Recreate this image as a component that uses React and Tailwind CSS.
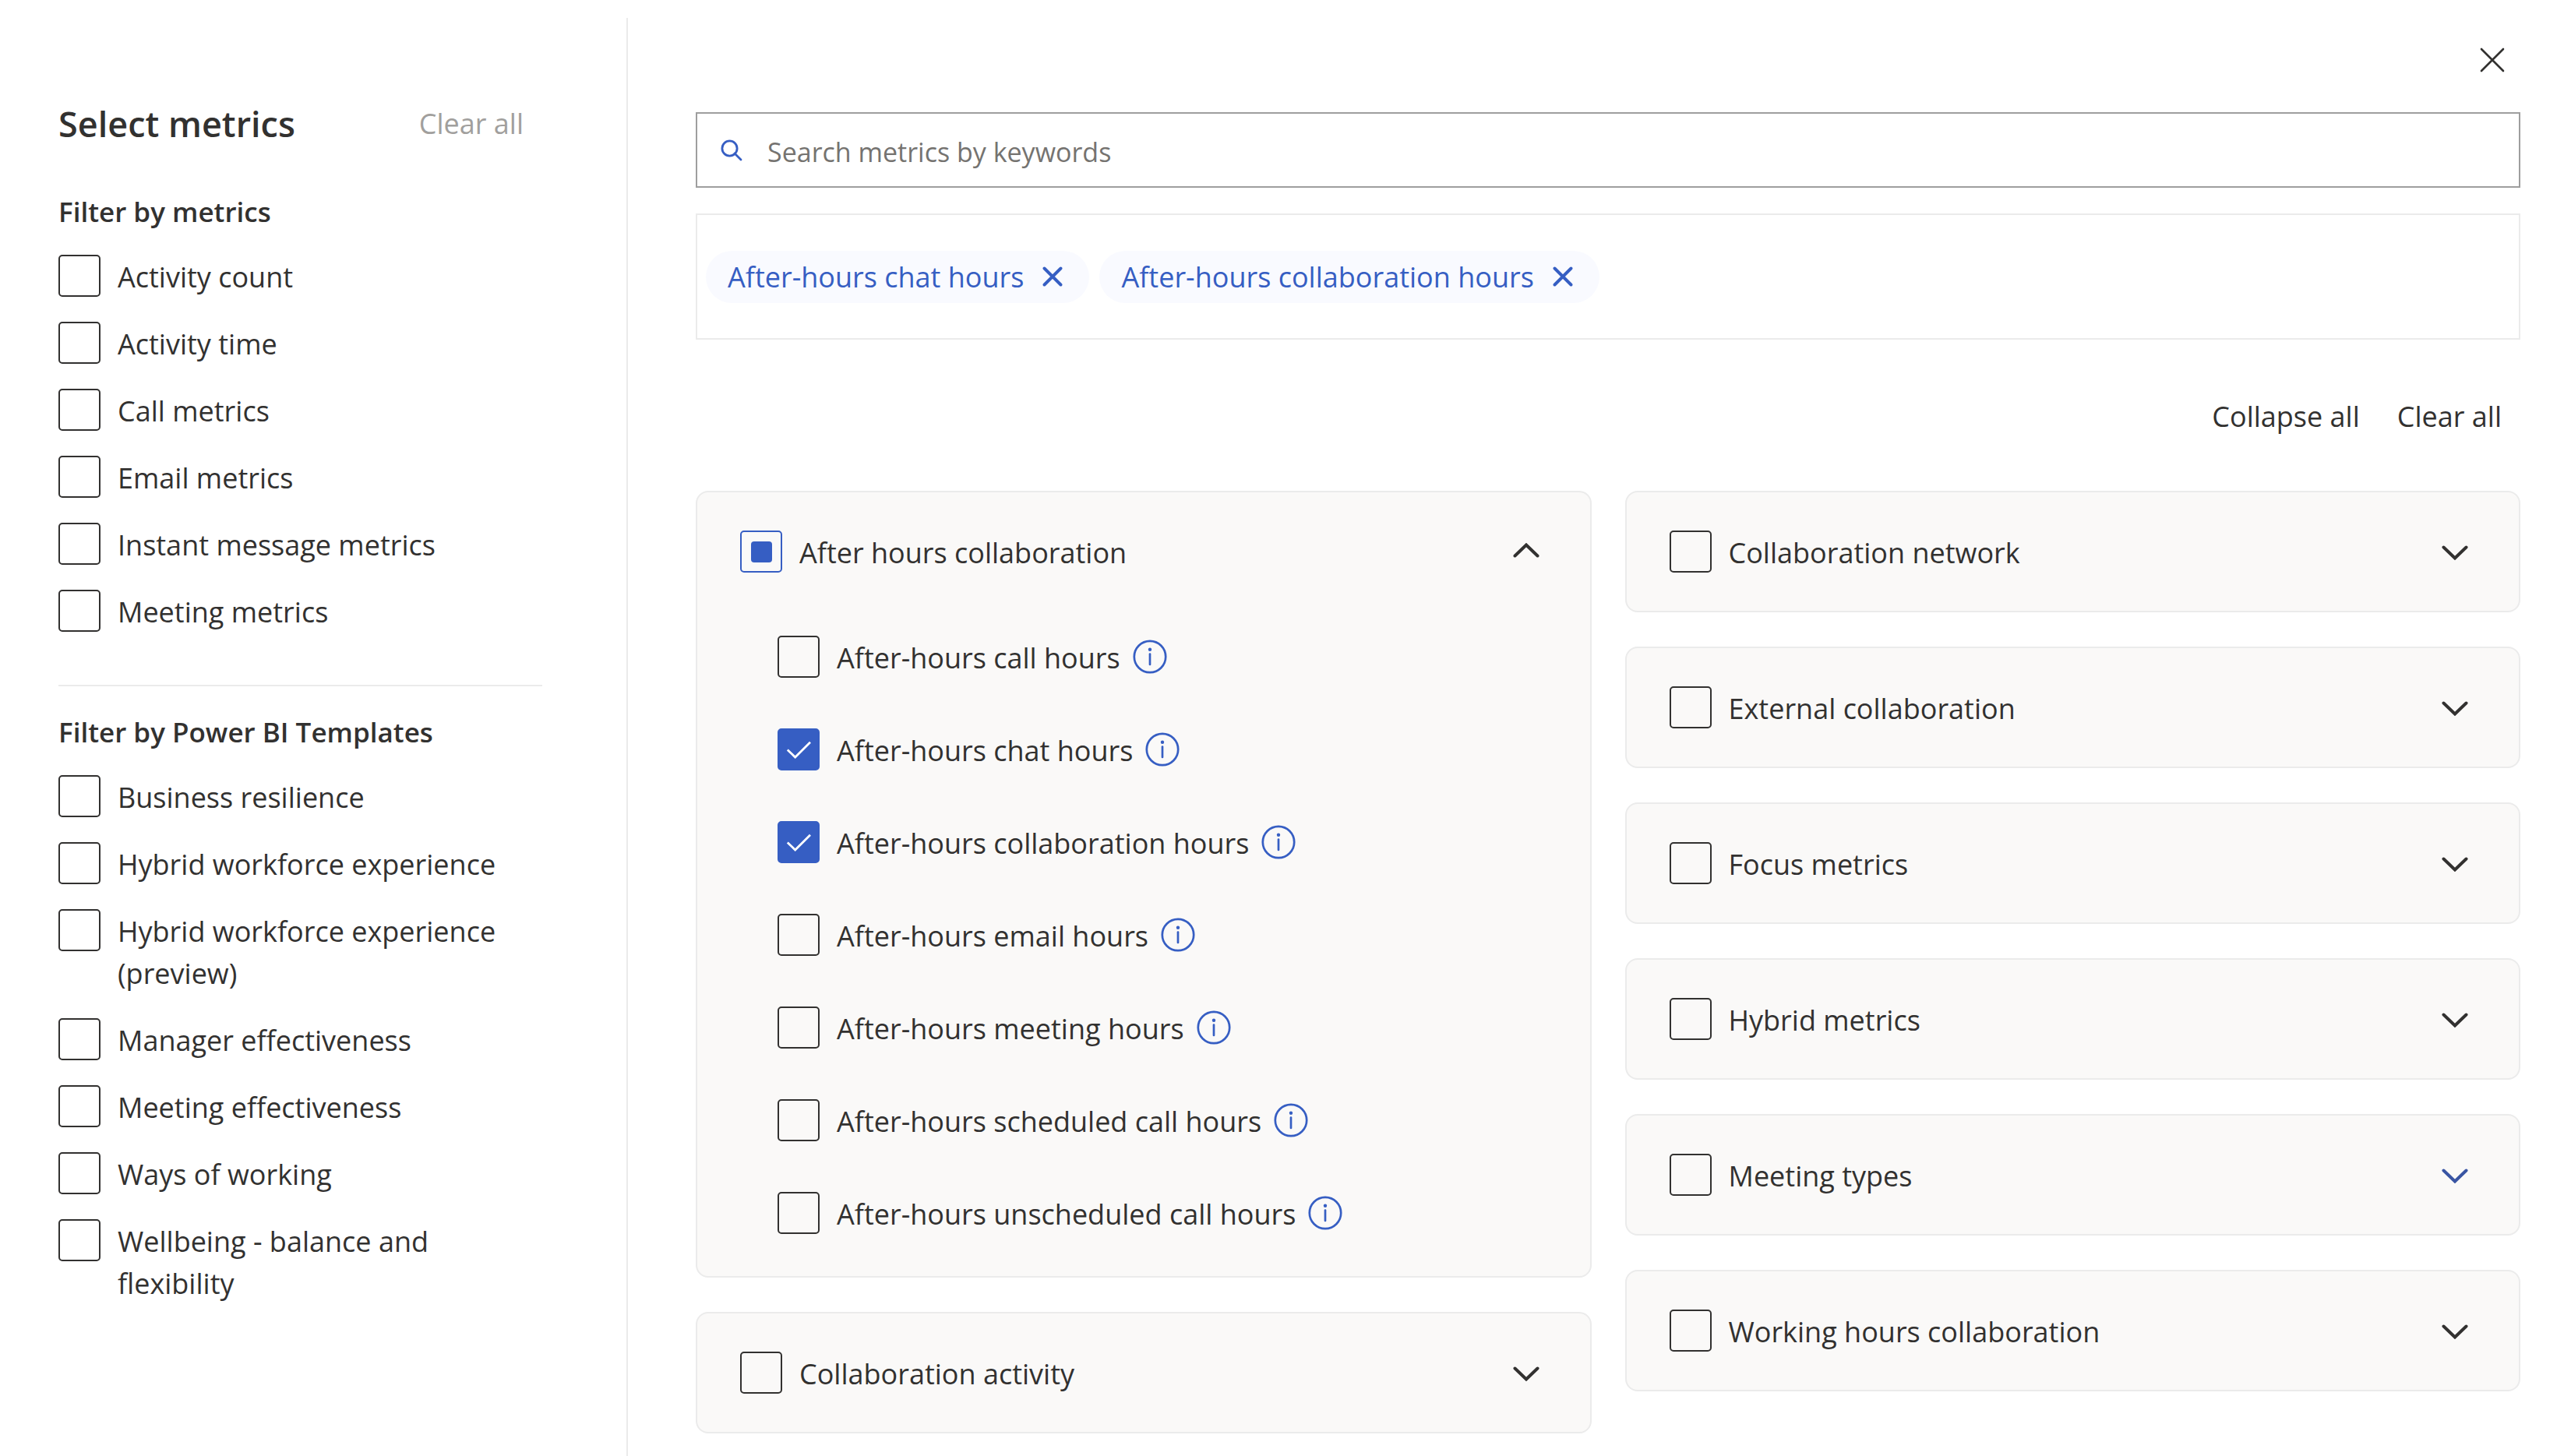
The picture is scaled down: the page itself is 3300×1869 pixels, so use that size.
import React, { useId } from "react";

const METRIC_FILTERS = [
  "Activity count",
  "Activity time",
  "Call metrics",
  "Email metrics",
  "Instant message metrics",
  "Meeting metrics",
];

const TEMPLATE_FILTERS = [
  "Business resilience",
  "Hybrid workforce experience",
  "Hybrid workforce experience (preview)",
  "Manager effectiveness",
  "Meeting effectiveness",
  "Ways of working",
  "Wellbeing - balance and flexibility",
];

const AFTER_HOURS = [
  { label: "After-hours call hours", checked: false },
  { label: "After-hours chat hours", checked: true },
  { label: "After-hours collaboration hours", checked: true },
  { label: "After-hours email hours", checked: false },
  { label: "After-hours meeting hours", checked: false },
  { label: "After-hours scheduled call hours", checked: false },
  { label: "After-hours unscheduled call hours", checked: false },
];

const RIGHT_GROUPS = [
  { label: "Collaboration network" },
  { label: "External collaboration" },
  { label: "Focus metrics" },
  { label: "Hybrid metrics" },
  { label: "Meeting types", active: true },
  { label: "Working hours collaboration" },
];

function Checkbox({ label, checked = false, mixed = false, children }) {
  const id = useId();
  return (
    <div className="flex items-start">
      <span className="relative block size-[54px] shrink-0">
        <input
          id={id}
          type="checkbox"
          defaultChecked={checked}
          ref={(el) => {
            if (el) el.indeterminate = mixed;
          }}
          className="peer block size-[54px] appearance-none rounded-[5px] border-2 border-[#323130] checked:border-[#365ec3] checked:bg-[#365ec3] indeterminate:border-[#365ec3]"
        />
        <svg
          viewBox="0 0 54 54"
          aria-hidden="true"
          className="pointer-events-none absolute inset-0 hidden size-[54px] peer-checked:block"
        >
          <path d="M12.8 27.5 L22.7 37 L42 17.8" fill="none" stroke="#fff" strokeWidth="2.8" />
        </svg>
        <span className="pointer-events-none absolute inset-0 m-auto hidden size-[27px] rounded-[4px] bg-[#365ec3] peer-indeterminate:block" />
      </span>
      <label htmlFor={id} className="-mb-0.5 min-w-0 pt-0.5 pl-[22px]">
        {label}
      </label>
      {children}
    </div>
  );
}

function InfoIcon() {
  return (
    <svg viewBox="0 0 44 44" aria-hidden="true" className="size-11" fill="none" stroke="#365ec3">
      <circle cx="22" cy="22" r="20.2" strokeWidth="2.7" />
      <path d="M22 18.5 V32" strokeWidth="2.7" strokeLinecap="round" />
      <circle cx="22" cy="12.8" r="2.2" fill="#365ec3" stroke="none" />
    </svg>
  );
}

function Chevron({ up = false }) {
  return (
    <svg viewBox="0 0 36 22" aria-hidden="true" className="h-[22px] w-9" fill="none" stroke="currentColor">
      <path
        d={up ? "M3.5 16.5 L18 2.5 L32.5 16.5" : "M3.5 5.5 L18 19.5 L32.5 5.5"}
        strokeWidth="4"
        strokeLinecap="round"
      />
    </svg>
  );
}

function GroupCard({ label, mixed, open = false, active = false, children }) {
  return (
    <section className="rounded-2xl border-2 border-[#ebebeb] bg-[#faf9f8] pt-[49px] pl-[55px]">
      <div className="flex items-center justify-between pr-16 pb-[49px]">
        <Checkbox label={label} mixed={mixed} />
        <button
          type="button"
          aria-label={(open ? "Collapse " : "Expand ") + label}
          aria-expanded={open}
          className={active ? "text-[#3955a3]" : "text-[#323130]"}
        >
          <Chevron up={open} />
        </button>
      </div>
      {children}
    </section>
  );
}

function Tag({ label }) {
  return (
    <li className="flex h-[67px] items-center gap-6 rounded-full bg-[#f9faff] pr-[34px] pl-7 text-[#365ec3]">
      <span className="pt-0.5">{label}</span>
      <button type="button" aria-label={"Remove " + label}>
        <svg viewBox="0 0 26 26" aria-hidden="true" className="size-[26px]">
          <path d="M2.5 2.5 L23.5 23.5 M23.5 2.5 L2.5 23.5" stroke="currentColor" strokeWidth="3.9" strokeLinecap="round" />
        </svg>
      </button>
    </li>
  );
}

function FilterGroup({ title, items }) {
  return (
    <fieldset>
      <legend className="text-[35px] font-semibold">{title}</legend>
      <div className="mt-7 flex flex-col gap-8">
        {items.map((item) => (
          <Checkbox key={item} label={item} />
        ))}
      </div>
    </fieldset>
  );
}

export default function App() {
  return (
    <div className="flex min-h-screen items-stretch bg-white pt-[23px] font-['Open_Sans','Noto_Sans',sans-serif] text-[36px] leading-[54px] text-[#323130]">
      <aside className="w-[806px] shrink-0 border-r-2 border-[#ebebeb] pt-[102px] pr-[108px] pl-[75px]">
        <header className="flex items-center justify-between pr-6">
          <h1 className="text-[45px] leading-[68px] font-semibold">Select metrics</h1>
          <button type="button" disabled className="text-[#a19f9d]">
            Clear all
          </button>
        </header>
        <div className="mt-[52px]">
          <FilterGroup title="Filter by metrics" items={METRIC_FILTERS} />
        </div>
        <hr className="mt-[68px] mb-8 border-t-2 border-[#ebebeb]" />
        <FilterGroup title="Filter by Power BI Templates" items={TEMPLATE_FILTERS} />
      </aside>

      <main className="flex min-w-0 flex-1 flex-col pr-[65px] pb-[30px] pl-[87px]">
        <div className="flex justify-end pt-[38px] pr-5">
          <button type="button" aria-label="Close">
            <svg viewBox="0 0 32 32" aria-hidden="true" className="size-8">
              <path d="M2 2 L30 30 M30 2 L2 30" stroke="#323130" strokeWidth="2.6" strokeLinecap="round" />
            </svg>
          </button>
        </div>

        <div className="mt-[51px] flex h-[97px] items-center gap-8 border-2 border-[#9e9e9e] pl-[30px]">
          <svg viewBox="0 0 28 28" aria-hidden="true" className="size-7 shrink-0" fill="none" stroke="#365ec3">
            <circle cx="11.5" cy="11.5" r="9.6" strokeWidth="2.8" />
            <path d="M18 18 L26 26" strokeWidth="2.8" strokeLinecap="round" />
          </svg>
          <input
            type="search"
            aria-label="Search metrics by keywords"
            placeholder="Search metrics by keywords"
            className="h-full min-w-0 flex-1 bg-transparent pt-1 text-[34px] outline-none placeholder:text-[#757370]"
          />
        </div>

        <ul className="mt-[33px] flex h-[162px] items-center gap-[13px] border-2 border-[#ebebeb] pl-[11px]">
          <Tag label="After-hours chat hours" />
          <Tag label="After-hours collaboration hours" />
        </ul>

        <div className="mt-[72px] flex justify-end gap-12 pr-6">
          <button type="button">Collapse all</button>
          <button type="button">Clear all</button>
        </div>

        <div className="mt-[68px] grid grid-cols-2 items-start gap-x-[43px]">
          <div className="flex flex-col gap-11">
            <GroupCard label="After hours collaboration" mixed open>
              <div className="mt-8 flex flex-col gap-[65px] pb-[54px] pl-12">
                {AFTER_HOURS.map((metric) => (
                  <Checkbox key={metric.label} label={metric.label} checked={metric.checked}>
                    <button type="button" aria-label={"About " + metric.label} className="flex h-[54px] items-center pl-4">
                      <InfoIcon />
                    </button>
                  </Checkbox>
                ))}
              </div>
            </GroupCard>
            <GroupCard label="Collaboration activity" />
          </div>
          <div className="flex flex-col gap-11">
            {RIGHT_GROUPS.map((group) => (
              <GroupCard key={group.label} label={group.label} active={group.active} />
            ))}
          </div>
        </div>
      </main>
    </div>
  );
}
